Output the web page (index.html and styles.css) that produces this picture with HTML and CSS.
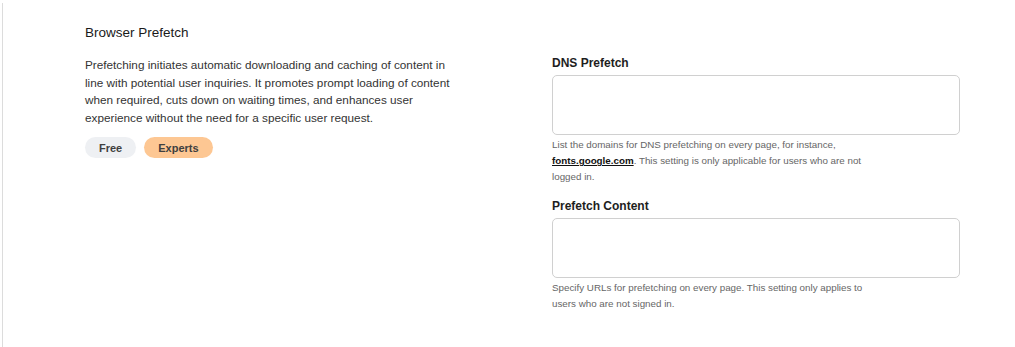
FILE: index.html
```html
<!DOCTYPE html>
<html lang="en">
<head>
<meta charset="utf-8">
<title>Browser Prefetch</title>
<link rel="stylesheet" href="styles.css">
</head>
<body>
<div class="card">
  <section class="setting">
    <div class="intro">
      <h2 class="title">Browser Prefetch</h2>
      <p class="desc">Prefetching initiates automatic downloading and caching of content in line with potential user inquiries. It promotes prompt loading of content when required, cuts down on waiting times, and enhances user experience without the need for a specific user request.</p>
      <div class="tags">
        <span class="tag tag-free">Free</span>
        <span class="tag tag-experts">Experts</span>
      </div>
    </div>
    <div class="fields">
      <div class="field">
        <label class="label" for="dns">DNS Prefetch</label>
        <textarea id="dns" class="input"></textarea>
        <p class="help">List the domains for DNS prefetching on every page, for instance, <a class="link" href="#">fonts.google.com</a>. This setting is only applicable for users who are not logged in.</p>
      </div>
      <div class="field">
        <label class="label" for="content">Prefetch Content</label>
        <textarea id="content" class="input"></textarea>
        <p class="help">Specify URLs for prefetching on every page. This setting only applies to users who are not signed in.</p>
      </div>
    </div>
  </section>
</div>
</body>
</html>
```

FILE: styles.css
```css
* { box-sizing: border-box; }

html, body {
  margin: 0;
  padding: 0;
  background: #ffffff;
}

body {
  font-family: "Liberation Sans", Arial, sans-serif;
  color: #333333;
  height: 347px;
  overflow: hidden;
}

.card {
  margin: 3px 0 0 2px;
  border-left: 1px solid #dcdcdc;
  height: 344px;
  padding: 21px 0 0 82px;
}

.setting {
  display: flex;
  gap: 87px;
}

.intro {
  width: 380px;
  flex: none;
}

.title {
  margin: 0;
  font-size: 13.5px;
  line-height: 18px;
  font-weight: 400;
  color: #1a1a1a;
}

.desc {
  margin: 14px 0 0;
  font-size: 11.75px;
  line-height: 17.6px;
  color: #333333;
  width: 380px;
}

.tags {
  display: flex;
  gap: 8px;
  margin-top: 11px;
}

.tag {
  display: inline-flex;
  align-items: center;
  height: 21px;
  padding: 0 14px;
  border-radius: 11px;
  font-size: 11px;
  font-weight: 700;
  color: #404040;
}

.tag-free {
  background: #eef0f3;
}

.tag-experts {
  background: #fdc793;
}

.fields {
  width: 408px;
  flex: none;
  padding-top: 31px;
  display: flex;
  flex-direction: column;
  gap: 13px;
}

.field {
  display: flex;
  flex-direction: column;
}

.label {
  font-size: 12px;
  line-height: 16px;
  font-weight: 700;
  color: #1e1e1e;
  margin-bottom: 4px;
}

.input {
  display: block;
  width: 408px;
  height: 60px;
  border: 1px solid #d0d0d0;
  border-radius: 5px;
  resize: none;
  background: #ffffff;
  margin: 0;
  padding: 6px 8px;
}

.help {
  margin: 2px 0 0;
  width: 320px;
  font-size: 9.8px;
  line-height: 16px;
  color: #666666;
}

.link {
  color: #111111;
  font-weight: 700;
  text-decoration: underline;
}
```
